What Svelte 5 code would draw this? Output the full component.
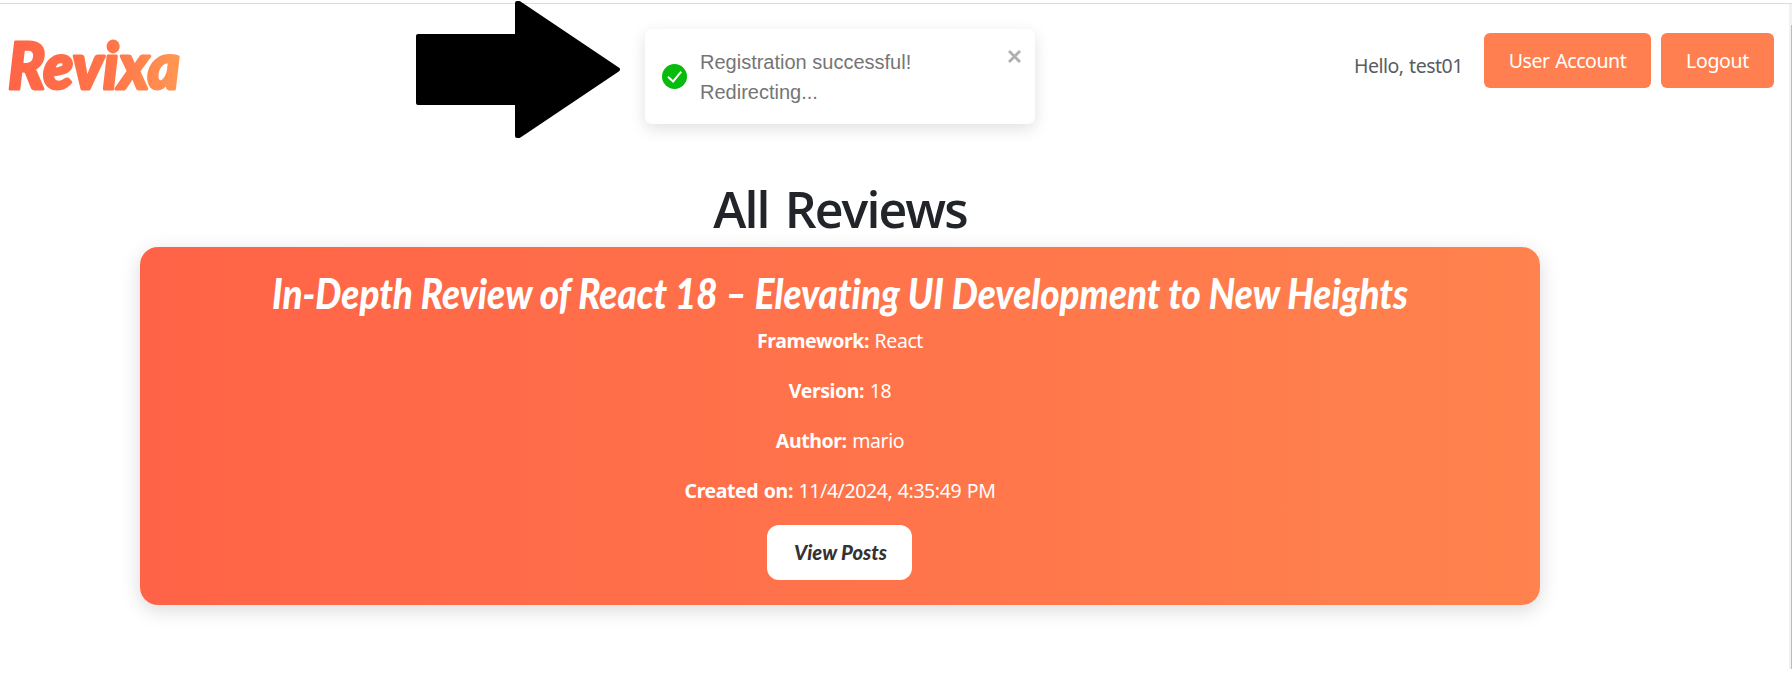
<script>
  const review = {
    title: 'In-Depth Review of React 18 – Elevating UI Development to New Heights',
    details: [
      { label: 'Framework:', value: 'React' },
      { label: 'Version:', value: '18' },
      { label: 'Author:', value: 'mario' },
      { label: 'Created on:', value: '11/4/2024, 4:35:49 PM' }
    ]
  };
</script>

<div class="page">
  <header>
    <svg class="logo" width="190" height="90" viewBox="0 0 190 90" role="img" aria-label="Revixa">
      <defs>
        <linearGradient id="brand" gradientUnits="userSpaceOnUse" x1="0" y1="0" x2="185" y2="0">
          <stop offset="0" stop-color="#ff6347" />
          <stop offset="0.6" stop-color="#ff7549" />
          <stop offset="1" stop-color="#ff9a55" />
        </linearGradient>
      </defs>
      <text class="script" x="8" y="56" font-size="65" textLength="172" lengthAdjust="spacingAndGlyphs" fill="url(#brand)" stroke="url(#brand)" stroke-width="3" stroke-linejoin="round">Revixa</text>
    </svg>
    <nav>
      <span class="hello">Hello, test01</span>
      <button class="account">User Account</button>
      <button class="logout">Logout</button>
    </nav>
  </header>

  <main>
    <h1>All Reviews</h1>
    <article>
      <svg class="title" width="1140" height="58" viewBox="0 0 1140 58">
        <text class="script" x="2" y="37" font-size="42" textLength="1136" lengthAdjust="spacingAndGlyphs" fill="#fff">{review.title}</text>
      </svg>
      {#each review.details as item}
        <p><strong>{item.label}</strong> {item.value}</p>
      {/each}
      <button class="view">
        <svg width="96" height="36" viewBox="0 0 96 36">
          <text class="script" x="2" y="25" font-size="21" textLength="93" lengthAdjust="spacingAndGlyphs" fill="#333">View Posts</text>
        </svg>
      </button>
    </article>
  </main>

  <svg class="arrow" width="210" height="142" viewBox="0 0 210 142">
    <path d="M3 36H102V3H104L203 69.5L104 136H102V103H3Z" stroke="#000" stroke-width="4" stroke-linejoin="round" />
  </svg>

  <div class="toast">
    <svg class="check" width="25" height="25" viewBox="0 0 25 25">
      <circle cx="12.5" cy="12.5" r="12.5" fill="#07bc0c" />
      <path d="M6 12.8L11.1 17.5L19.2 7.6" fill="none" stroke="#fff" stroke-width="2" />
    </svg>
    <div class="message">Registration successful!<br />Redirecting...</div>
    <svg class="close" width="13" height="13" viewBox="0 0 13 13">
      <path d="M1 1L12 12M12 1L1 12" stroke="#afafaf" stroke-width="2.8" />
    </svg>
  </div>

  <div class="scrollbar"><div class="thumb"></div></div>
</div>

<style>
  :global(body) { background: #fff; overflow: hidden; }
  .page {
    position: relative;
    box-sizing: border-box;
    width: 1792px;
    height: 678px;
    padding-top: 3px;
    font-family: "Noto Sans", "Open Sans", sans-serif;
    font-size: 19.5px;
    overflow: hidden;
  }
  .page::before {
    content: "";
    position: absolute;
    top: 3px;
    left: 0;
    width: 100%;
    height: 1px;
    background: #dcdcdc;
  }
  svg { overflow: visible; }
  .script {
    font-family: Lato, sans-serif;
    font-style: italic;
    font-weight: 900;
    font-variant-ligatures: none;
  }
  header {
    display: flex;
    justify-content: space-between;
    height: 177px;
    padding: 30px 18px 0 0;
    box-sizing: border-box;
  }
  .logo { display: block; }
  nav { display: flex; align-items: flex-start; }
  nav button {
    height: 55px;
    padding: 0 0 1px;
    border: 0;
    border-radius: 6px;
    background: #ff7f50;
    color: #fff;
    font: inherit;
  }
  .hello { width: 130px; padding-top: 19px; line-height: 28px; color: #595c5f; letter-spacing: -0.5px; word-spacing: 1px; white-space: nowrap; }
  .account { width: 167px; margin-right: 10px; letter-spacing: -0.45px; word-spacing: 1px; }
  .logout { width: 113px; letter-spacing: -0.35px; }
  main { width: 1400px; margin-left: 140px; text-align: center; }
  h1 {
    margin: 0;
    height: 67px;
    line-height: 58px;
    font-family: "Open Sans", sans-serif;
    font-size: 50px;
    font-weight: 600;
    color: #212529;
    letter-spacing: -1.9px;
    word-spacing: 5px;
  }
  article {
    box-sizing: border-box;
    height: 358px;
    padding-top: 25px;
    border-radius: 18px;
    background: linear-gradient(90deg, #ff6347, #ff834e);
    box-shadow: 0 5px 20px rgba(0, 0, 0, 0.15);
    color: #fff;
  }
  .title { display: block; margin-left: 130px; }
  p { height: 30px; margin: 0 0 20px; line-height: 30px; letter-spacing: -0.42px; word-spacing: 1px; }
  .title + p { margin-top: -4px; }
  .view {
    display: flex;
    align-items: center;
    justify-content: center;
    width: 145px;
    height: 55px;
    margin: -1px auto 0 627px;
    padding: 0;
    border: 0;
    border-radius: 12px;
    background: #fff;
  }
  .arrow { position: absolute; left: 415px; top: 0; }
  .toast {
    position: absolute;
    left: 645px;
    top: 29px;
    width: 390px;
    height: 95px;
    box-sizing: border-box;
    display: flex;
    align-items: center;
    padding: 0 14px 0 17px;
    border-radius: 7px;
    background: #fff;
    box-shadow: 0 5px 16px rgba(0, 0, 0, 0.12);
  }
  .message {
    flex: 1;
    margin-left: 13px;
    font: 20px/30px "Liberation Sans", sans-serif;
    color: #757575;
  }
  .close { align-self: flex-start; margin-top: 21px; }
  .scrollbar { box-sizing: border-box; position: absolute; right: 0; top: 4px; width: 3px; height: 665px; padding: 21px 0 0 2px; background: #f1f1f1; }
  .thumb { width: 1px; height: 644px; background: #bcbcbc; }
</style>
